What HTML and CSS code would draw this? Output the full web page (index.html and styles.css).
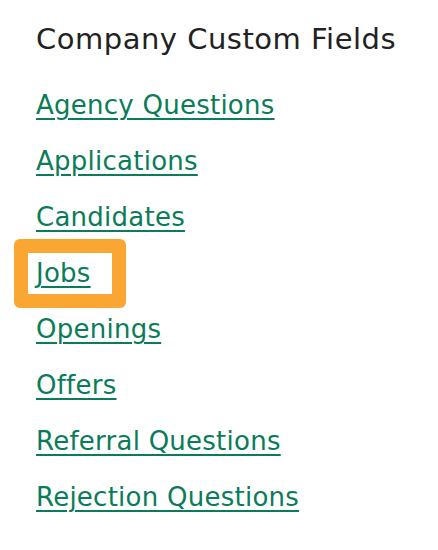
FILE: index.html
```html
<!DOCTYPE html>
<html lang="en">
<head>
    <meta charset="UTF-8">
    <meta name="viewport" content="width=device-width, initial-scale=1.0">
    <title>Company Custom Fields</title>
    <link rel="stylesheet" href="styles.css">
</head>
<body>

<div class="fields-panel">
    <h2 class="panel-title">Company Custom Fields</h2>
    <ul class="field-list">
        <li><a href="#">Agency Questions</a></li>
        <li><a href="#">Applications</a></li>
        <li><a href="#">Candidates</a></li>
        <li class="highlighted"><a href="#">Jobs</a></li>
        <li><a href="#">Openings</a></li>
        <li><a href="#">Offers</a></li>
        <li><a href="#">Referral Questions</a></li>
        <li><a href="#">Rejection Questions</a></li>
    </ul>
</div>

</body>
</html>
```

FILE: styles.css
```css
body {
    font-family: 'DejaVu Sans', 'Liberation Sans', sans-serif;
    background-color: #fff;
    margin: 0;
    padding: 0;
}

.fields-panel {
    padding: 21px 36px 0;
}

.panel-title {
    color: #222;
    font-size: 29px;
    font-weight: normal;
    letter-spacing: 0.5px;
    line-height: 36px;
    margin: 0 0 32px;
}

.field-list {
    list-style: none;
    margin: 0;
    padding: 0;
}

.field-list li {
    height: 56px;
}

.field-list a {
    display: inline-block;
    color: #0a7c59;
    font-size: 26px;
    letter-spacing: 0.25px;
    line-height: 32px;
    text-decoration: underline;
    text-decoration-thickness: 2px;
    text-underline-offset: 4px;
}

.field-list .highlighted a {
    position: relative;
}

/* orange call-out box around the Jobs link */
.field-list .highlighted a::before {
    content: "";
    position: absolute;
    left: -22px;
    top: -18px;
    width: 112px;
    height: 69px;
    box-sizing: border-box;
    border: 14px solid #f9a632;
    border-radius: 6px;
}
```
